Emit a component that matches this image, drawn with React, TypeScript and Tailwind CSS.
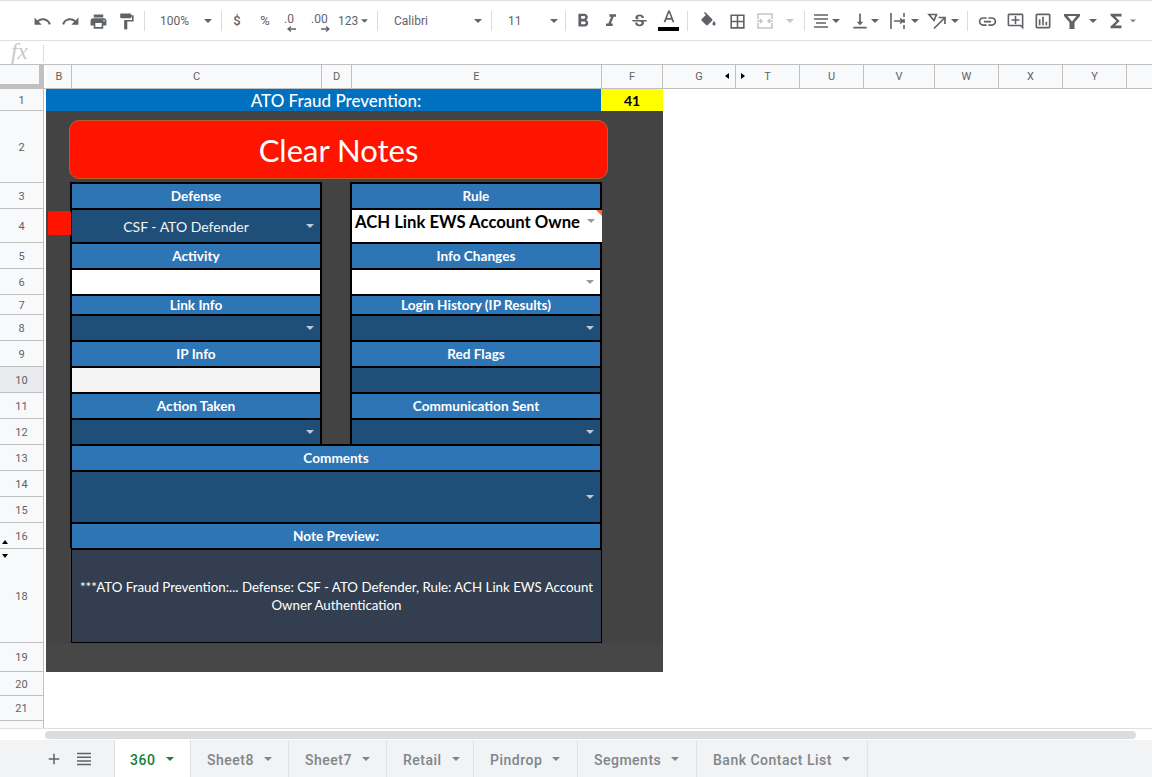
import React from 'react'
import {
  MdUndo, MdRedo, MdPrint, MdFormatPaint, MdFormatBold, MdFormatItalic, MdStrikethroughS,
  MdBorderAll, MdVerticalAlignBottom, MdLink, MdOutlineAddComment, MdOutlineInsertChart,
  MdFunctions, MdAdd,
} from 'react-icons/md'

const Caret: React.FC<{ className?: string }> = ({ className }) => (
  <svg width="8" height="4" viewBox="0 0 8 4" className={className}>
    <polygon points="0,0 8,0 4,4" fill="currentColor" />
  </svg>
)

const Sep: React.FC<{ className?: string }> = ({ className = '' }) => (
  <div className={`h-[20px] w-px bg-[#dadce0] shrink-0 ${className}`} />
)

const Ico: React.FC<{ className?: string; children: React.ReactNode }> = ({ className = 'w-[28px]', children }) => (
  <div className={`flex items-center justify-center shrink-0 text-[19px] text-[#5f6368] ${className}`}>{children}</div>
)

const Toolbar = () => (
  <div className="h-[41px] shrink-0 flex items-center pl-[28px] pt-[1px] border-t border-b border-[#e0e0e0] text-[#5f6368] text-[12px] font-['Roboto',sans-serif]">
    <Ico><MdUndo /></Ico>
    <Ico><MdRedo /></Ico>
    <Ico><MdPrint /></Ico>
    <Ico><MdFormatPaint /></Ico>
    <Sep className="ml-[4px]" />
    <span className="ml-[15px] w-[42px]">100%</span>
    <Caret className="ml-[2px]" />
    <Sep className="ml-[9px]" />
    <span className="ml-[10px] w-[10px] text-[13px] font-medium text-center">$</span>
    <span className="ml-[18px] w-[10px] text-[13px] text-center">%</span>
    <div className="ml-[14px] w-[14px] h-[24px] relative leading-[20px]">
      .0
      <svg width="9" height="6" viewBox="0 0 9 6" className="absolute left-[3px] top-[17px]"><path d="M9 3H2M4 0.5L1 3l3 2.5" stroke="#5f6368" strokeWidth="1.3" fill="none" /></svg>
    </div>
    <div className="ml-[13px] w-[20px] h-[24px] relative leading-[20px]">
      .00
      <svg width="9" height="6" viewBox="0 0 9 6" className="absolute left-[10px] top-[17px]"><path d="M0 3h7M5 0.5L8 3 5 5.5" stroke="#5f6368" strokeWidth="1.3" fill="none" /></svg>
    </div>
    <span className="ml-[7px] w-[23px]">123</span>
    <Caret className="w-[7px]" />
    <Sep className="ml-[9px]" />
    <span className="ml-[16px] w-[76px]">Calibri</span>
    <Caret className="ml-[4px]" />
    <Sep className="ml-[9px]" />
    <span className="ml-[16px] w-[41px]">11</span>
    <Caret className="ml-[1px]" />
    <Sep className="ml-[7px]" />
    <Ico className="ml-[3px] w-[28px]"><MdFormatBold className="text-[22px]" /></Ico>
    <Ico className="w-[28px]"><MdFormatItalic className="text-[20px]" /></Ico>
    <Ico className="w-[29px]"><MdStrikethroughS /></Ico>
    <div className="w-[29px] h-[26px] shrink-0 flex flex-col items-center">
      <svg width="20" height="20" viewBox="0 0 24 24" fill="#5f6368"><path d="M11 3L5.500 17h2.250l1.120-3h6.250l1.120 3h2.250L13 3h-2zm-1.380 9L12 5.670 14.380 12H9.620z" /></svg>
      <div className="w-[21px] h-[4px] bg-black mt-[-1px]" />
    </div>
    <Sep className="ml-[4px]" />
    <Ico className="ml-[6px] w-[28px]">
      <svg width="19" height="19" viewBox="0 0 24 24" fill="#5f6368">
        <path d="M16.560 8.940L7.620 0 6.210 1.410l2.380 2.380-5.150 5.150c-.59.59-.59 1.540 0 2.120l5.500 5.500c.29.29.68.44 1.060.44s.77-.15 1.060-.44l5.500-5.500c.59-.58.59-1.530 0-2.120zM19 11.500s-2 2.170-2 3.500c0 1.100.9 2 2 2s2-.9 2-2c0-1.330-2-3.500-2-3.500z" />
      </svg>
    </Ico>
    <Ico className="ml-[1px] w-[29px]"><MdBorderAll /></Ico>
    <svg width="20" height="20" viewBox="0 0 20 20" className="ml-[3px] shrink-0 text-[#c4c7c9]" fill="none" stroke="currentColor" strokeWidth="1.6">
      <path d="M3 8V3h14v5M3 12v5h14v-5M2 10h5M13 10h5M5 8l2 2-2 2M15 8l-2 2 2 2" />
    </svg>
    <Caret className="ml-[11px] text-[#c4c7c9]" />
    <Sep className="ml-[10px]" />
    <Ico className="ml-[2px] w-[28px]">
      <svg width="20" height="20" viewBox="0 0 20 20" stroke="#5f6368" strokeWidth="1.7" fill="none">
        <path d="M3 4h14M3 8h14M5 12h10M3 16h14" />
      </svg>
    </Ico>
    <Caret className="ml-[-3px]" />
    <Ico className="ml-[6px] w-[28px]"><MdVerticalAlignBottom className="text-[20px]" /></Ico>
    <Caret className="ml-[-3px]" />
    <svg width="20" height="20" viewBox="0 0 20 20" className="ml-[9px] shrink-0" fill="none" stroke="#5f6368" strokeWidth="1.6">
      <path d="M3 2v16M16 2v4M16 8v4M16 14v4M6 10h9M12 7.500l3 2.500-3 2.500" />
    </svg>
    <Caret className="ml-[3px]" />
    <svg width="20" height="20" viewBox="0 0 20 20" className="ml-[8px] shrink-0" fill="none" stroke="#5f6368" strokeWidth="1.7">
      <path d="M2 3.500h7.500L7 9.500zM7 17.500L17 7.500M11.500 6.500H18V13" />
    </svg>
    <Caret className="ml-[4px]" />
    <Sep className="ml-[8px]" />
    <Ico className="ml-[5px] w-[28px]"><MdLink className="text-[21px]" /></Ico>
    <Ico className="w-[28px]"><MdOutlineAddComment /></Ico>
    <Ico className="w-[28px]"><MdOutlineInsertChart className="text-[20px]" /></Ico>
    <Ico className="w-[29px]">
      <svg width="20" height="20" viewBox="0 0 20 20" fill="#5f6368">
        <path fillRule="evenodd" d="M2 3h16v2l-5.500 6.500V18h-5v-6.500L2 5zM5.500 5l4.500 5.500L14.500 5z" />
      </svg>
    </Ico>
    <Caret className="ml-[3px]" />
    <Ico className="ml-[5px] w-[28px]"><MdFunctions className="text-[22px]" /></Ico>
    <Caret className="w-[6px] text-[#80868b]" />
  </div>
)

const FormulaBar = () => (
  <div className="h-[23px] shrink-0 flex items-start pl-[11px]">
    <span className="font-['Liberation_Serif',serif] italic text-[23px] leading-[21px] text-[#c8c8c8] w-[32px]">fx</span>
    <div className="w-px h-[17px] mt-[4px] bg-[#dadce0]" />
  </div>
)

const columns = [
  { label: 'B', width: 'w-[25px]' },
  { label: 'C', width: 'w-[250px]' },
  { label: 'D', width: 'w-[30px]' },
  { label: 'E', width: 'w-[250px]' },
  { label: 'F', width: 'w-[61px]' },
  { label: 'G', width: 'w-[73px]' },
  { label: 'T', width: 'w-[64px]' },
  { label: 'U', width: 'w-[64px]' },
  { label: 'V', width: 'w-[71px]' },
  { label: 'W', width: 'w-[64px]' },
  { label: 'X', width: 'w-[64px]' },
  { label: 'Y', width: 'w-[64px]' },
]

const ColumnHeader = () => (
  <div className="h-[25px] shrink-0 flex bg-[#f8f9fa] border-t border-b border-[#c0c0c0] text-[11px] leading-[23px] text-[#5f6368] font-['Roboto',sans-serif]">
    <div className="w-[44px] shrink-0 border-r-[5px] border-b-[4px] border-[#c0c0c0]" />
    <div className="w-[3px] shrink-0 bg-white" />
    {columns.map((c) => (
      <div key={c.label} className={`${c.width} shrink-0 text-center border-r border-[#c0c0c0] relative`}>
        {c.label}
        {c.label === 'G' && <span className="absolute right-[6px] top-[8px] w-0 h-0 border-y-[3.5px] border-y-transparent border-r-[4px] border-r-black" />}
        {c.label === 'T' && <span className="absolute left-[5px] top-[8px] w-0 h-0 border-y-[3.5px] border-y-transparent border-l-[4px] border-l-black" />}
      </div>
    ))}
  </div>
)

const rows = [
  { label: '1', height: 'h-[22px]' },
  { label: '2', height: 'h-[72px]' },
  { label: '3', height: 'h-[26px]' },
  { label: '4', height: 'h-[34px]' },
  { label: '5', height: 'h-[26px]' },
  { label: '6', height: 'h-[26px]' },
  { label: '7', height: 'h-[20px]' },
  { label: '8', height: 'h-[26px]' },
  { label: '9', height: 'h-[26px]' },
  { label: '10', height: 'h-[26px]', active: true },
  { label: '11', height: 'h-[26px]' },
  { label: '12', height: 'h-[26px]' },
  { label: '13', height: 'h-[26px]' },
  { label: '14', height: 'h-[26px]' },
  { label: '15', height: 'h-[26px]' },
  { label: '16', height: 'h-[26px]' },
  { label: '18', height: 'h-[94px]' },
  { label: '19', height: 'h-[29px]' },
  { label: '20', height: 'h-[24px]' },
  { label: '21', height: 'h-[25px]' },
]

const RowHeader = () => (
  <div className="w-[44px] shrink-0 flex flex-col bg-[#f8f9fa] border-r border-[#c0c0c0] text-[11px] text-[#5f6368] font-['Roboto',sans-serif]">
    {rows.map((r) => (
      <div
        key={r.label}
        className={`${r.height} shrink-0 flex items-center justify-center pt-[3px] border-b border-[#c0c0c0] relative ${r.active ? 'bg-[#e8eaed]' : ''}`}
      >
        {r.label}
        {r.label === '16' && <span className="absolute left-[2px] bottom-[4px] w-0 h-0 border-x-[3.5px] border-x-transparent border-b-[4px] border-b-black" />}
        {r.label === '18' && <span className="absolute left-[2px] top-[5px] w-0 h-0 border-x-[3.5px] border-x-transparent border-t-[4px] border-t-black" />}
      </div>
    ))}
  </div>
)

const Label: React.FC<{ height: string; children: React.ReactNode }> = ({ height, children }) => (
  <div className={`${height} shrink-0 bg-[#2e75b6] text-white font-bold text-[13.6px] flex items-center justify-center`}>{children}</div>
)

const DarkCell: React.FC<{ height?: string; bg?: string }> = ({ height = 'h-[24px]', bg = 'bg-[#1f4e79]' }) => (
  <div className={`${height} shrink-0 ${bg} flex items-center justify-end pr-[6px]`}>
    <Caret className={bg === 'bg-white' ? 'text-[#999999]' : 'text-[#c3cad3]'} />
  </div>
)

const Sheet = () => (
  <div className="w-[617px] shrink-0 font-['Lato',sans-serif]">
    <div className="h-[22px] flex">
      <div className="w-[555px] pl-[25px] bg-[#0070c0] text-white text-[17px] font-medium leading-[23px] text-center">ATO Fraud Prevention:</div>
      <div className="w-[62px] bg-[#ffff00] text-black text-[14px] font-bold leading-[23px] text-center">41</div>
    </div>
    <div className="h-[561px] bg-[#434343]">
      <div className="pt-[9px] pl-[23px] h-[71px]">
        <div className="w-[539px] h-[59px] rounded-[10px] bg-[#ff1400] border border-[#b5622a] text-white text-[31px] leading-[58px] text-center">
          Clear Notes
        </div>
      </div>
      <div className="flex">
        <div className="w-[24px] shrink-0 pl-[2px] pt-[29px]">
          <div className="relative z-10 w-[23px] h-[24px] rounded-[1px] bg-[#ff1400]" />
        </div>
        <div className="w-[252px] shrink-0 bg-black border-2 border-black flex flex-col gap-[2px] border-b-0">
          <Label height="h-[24px]">Defense</Label>
          <div className="h-[32px] shrink-0 bg-[#1f4e79] flex items-center text-[#f3f5f7] text-[14px]">
            <span className="flex-1 text-center">CSF - ATO Defender</span>
            <Caret className="mr-[6px] ml-[6px] text-[#c3cad3]" />
          </div>
          <Label height="h-[24px]">Activity</Label>
          <div className="h-[24px] shrink-0 bg-white" />
          <Label height="h-[18px]">Link Info</Label>
          <DarkCell />
          <Label height="h-[24px]">IP Info</Label>
          <div className="h-[24px] shrink-0 bg-[#f3f3f3]" />
          <Label height="h-[24px]">Action Taken</Label>
          <DarkCell />
        </div>
        <div className="w-[28px] shrink-0" />
        <div className="w-[252px] shrink-0 bg-black border-2 border-black flex flex-col gap-[2px] border-b-0">
          <Label height="h-[24px]">Rule</Label>
          <div className="h-[32px] shrink-0 bg-white mr-[-2px] relative flex items-start overflow-hidden">
            <span className="w-[235px] pl-[3px] text-black font-bold text-[16.7px] leading-[24px] whitespace-nowrap">ACH Link EWS Account Owne</span>
            <Caret className="mt-[9px] text-[#999999]" />
            <div className="absolute top-0 right-0 w-0 h-0 border-l-[6px] border-l-transparent border-t-[6px] border-t-[#ff6d2e]" />
          </div>
          <Label height="h-[24px]">Info Changes</Label>
          <DarkCell bg="bg-white" />
          <Label height="h-[18px]">Login History (IP Results)</Label>
          <DarkCell />
          <Label height="h-[24px]">Red Flags</Label>
          <div className="h-[24px] shrink-0 bg-[#1f4e79]" />
          <Label height="h-[24px]">Communication Sent</Label>
          <DarkCell />
        </div>
      </div>
      <div className="ml-[24px] w-[532px] bg-black border-t-2 border-x-2 border-black flex flex-col gap-[2px]">
        <Label height="h-[24px]">Comments</Label>
        <DarkCell height="h-[50px]" />
        <Label height="h-[24px]">Note Preview:</Label>
      </div>
      <div className="ml-[25px] w-[531px] h-[95px] border-x border-b border-t-2 border-black bg-[#333f50] text-white text-[13.3px] leading-[18px] text-center flex items-center justify-center px-[6px] pb-[1px]">
        ***ATO Fraud Prevention:... Defense: CSF - ATO Defender, Rule: ACH Link EWS Account Owner Authentication
      </div>
      <div className="h-[29px] bg-[#474747]" />
    </div>
  </div>
)

const tabs = [
  { label: 'Sheet8', width: 'w-[98px]' },
  { label: 'Sheet7', width: 'w-[98px]' },
  { label: 'Retail', width: 'w-[87px]' },
  { label: 'Pindrop', width: 'w-[104px]' },
  { label: 'Segments', width: 'w-[119px]' },
  { label: 'Bank Contact List', width: 'w-[171px]' },
]

const TabBar = () => (
  <div className="h-[37px] shrink-0 flex bg-[#f1f3f4] font-['Roboto',sans-serif] text-[14px] font-medium tracking-[0.5px]">
    <div className="w-[114px] shrink-0 flex items-center pl-[45px] pt-[1px] text-[#5f6368]">
      <MdAdd className="text-[18px]" />
      <svg width="14" height="14" viewBox="0 0 14 14" stroke="#5f6368" strokeWidth="1.5" className="ml-[14px]">
        <path d="M0 1.500h14M0 5.200h14M0 8.900h14M0 12.500h14" />
      </svg>
    </div>
    <div className="w-[77px] shrink-0 bg-white border-x border-[#e0e0e0] flex items-center pl-[15px] pt-[3px] text-[#188038]">
      360
      <Caret className="ml-[11px] mb-[3px]" />
    </div>
    {tabs.map((t) => (
      <div key={t.label} className={`${t.width} shrink-0 border-r border-[#e0e3e6] flex items-center pl-[16px] pt-[3px] text-[#80868b]`}>
        {t.label}
        <Caret className="ml-[10px] mb-[3px] text-[#80868b]" />
      </div>
    ))}
  </div>
)

export default function App() {
  return (
    <div className="w-[1152px] h-[777px] overflow-hidden flex flex-col bg-white">
      <Toolbar />
      <FormulaBar />
      <ColumnHeader />
      <div className="flex-1 min-h-0 flex overflow-hidden">
        <RowHeader />
        <div className="w-[2px] shrink-0" />
        <Sheet />
      </div>
      <div className="h-[12px] shrink-0 border-t border-[#e0e0e0] pt-[2px] pl-[45px] pr-[16px] bg-white">
        <div className="h-[8px] rounded-full bg-[#dadce0]" />
      </div>
      <TabBar />
    </div>
  )
}
